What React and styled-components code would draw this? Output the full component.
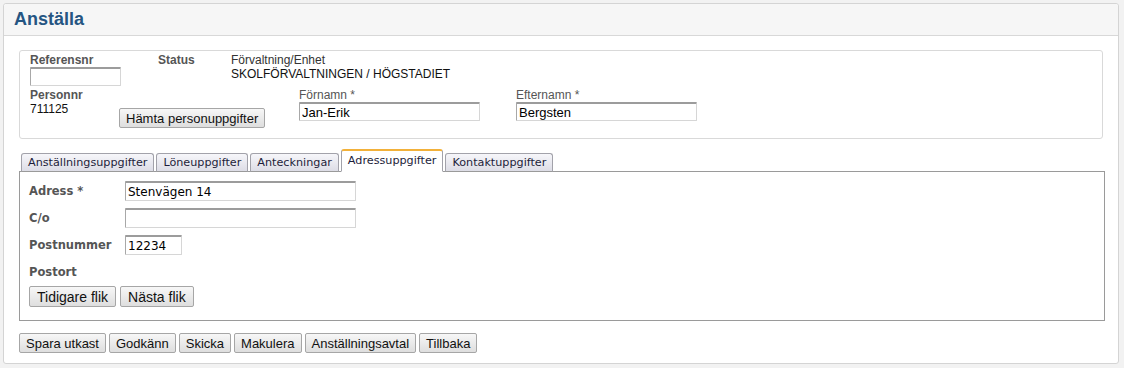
import styled, { createGlobalStyle } from "styled-components";

const GlobalStyle = createGlobalStyle`
  body {
    margin: 0;
    background: #f2f2f2;
    font-family: "Liberation Sans", Arial, sans-serif;
  }
`;

const Panel = styled.div`
  margin: 3px 5px 0 3px;
  background: #fff;
  border: 1px solid #d4d4d4;
  border-radius: 3px;
`;

const Header = styled.div`
  height: 31px;
  background: #f6f6f6;
  border-bottom: 1px solid #d8d8d8;
  border-radius: 3px 3px 0 0;
  padding-left: 10px;
`;

const Title = styled.h1`
  margin: 0;
  font-size: 18px;
  line-height: 31px;
  font-weight: bold;
  color: #255582;
`;

const Body = styled.div`
  padding: 14px 13px 10px 15px;
`;

const InfoBox = styled.div`
  margin-right: 2px;
  border: 1px solid #d9d9d9;
  border-radius: 3px;
  padding: 3px 10px 10px 10px;
`;

const InfoRow = styled.div`
  display: flex;
  margin-top: ${(p) => p.$top || 0}px;
`;

const Cell = styled.div`
  display: flex;
  flex-direction: column;
  width: ${(p) => (p.$w ? `${p.$w}px` : "auto")};
  padding-top: ${(p) => p.$pad || 0}px;
`;

const Label = styled.div`
  font-size: 12px;
  line-height: 13px;
  font-weight: ${(p) => (p.$bold ? "bold" : "normal")};
  color: ${(p) => (p.$dark ? "#333" : "#555")};
`;

const Value = styled.div`
  font-size: 12px;
  line-height: 14px;
  color: #111;
`;

const Input = styled.input`
  box-sizing: border-box;
  width: ${(p) => p.$w}px;
  height: ${(p) => p.$h || 20}px;
  margin: 0;
  padding: 0 2px;
  background: #fff;
  border: 1px solid #d6d6d6;
  border-top: 2px solid #9c9c9c;
  border-left: 1px solid #a8a8a8;
  border-radius: 1px;
  font-family: ${(p) =>
    p.$tahoma
      ? `"DejaVu Sans", Verdana, sans-serif`
      : `"Liberation Sans", Arial, sans-serif`};
  font-size: ${(p) => (p.$tahoma ? 12 : 13)}px;
  color: #000;
  outline: none;
`;

const Button = styled.button`
  height: ${(p) => (p.$big ? 21 : 20)}px;
  margin: 0;
  padding: 0 ${(p) => (p.$big ? 7 : 6)}px;
  border: 1px solid #a6a6a6;
  border-radius: 2px;
  background: linear-gradient(#f7f7f7, #dedede);
  font-family: "Liberation Sans", Arial, sans-serif;
  font-size: ${(p) => (p.$big ? 14 : 13)}px;
  color: #111;
  white-space: nowrap;
  cursor: pointer;
`;

const TabBar = styled.div`
  display: flex;
  align-items: flex-end;
  gap: 2px;
  height: 22px;
  margin-top: 11px;
  margin-bottom: -1px;
  padding-left: 2px;
  position: relative;
  z-index: 1;
`;

const Tab = styled.div`
  box-sizing: border-box;
  height: ${(p) => (p.$active ? 23 : 19)}px;
  padding: 0 6px;
  border: 1px solid #a2a2aa;
  border-top: ${(p) => (p.$active ? "2px solid #f2b13a" : "1px solid #a2a2aa")};
  border-bottom: ${(p) => (p.$active ? "1px solid #fff" : "1px solid #9a9a9a")};
  border-radius: 3px 3px 0 0;
  background: ${(p) =>
    p.$active ? "#fff" : "linear-gradient(#f6f6fa, #dddde6)"};
  font-family: "DejaVu Sans", Verdana, sans-serif;
  font-size: 11.2px;
  line-height: ${(p) => (p.$active ? 20 : 17)}px;
  color: #1d1d3a;
  white-space: nowrap;
`;

const TabPanel = styled.div`
  border: 1px solid #9a9a9a;
  padding: 9px 10px 13px 9px;
`;

const FormRow = styled.div`
  display: flex;
  align-items: center;
  margin-bottom: 7px;
`;

const FormLabel = styled.div`
  width: 96px;
  font-family: "DejaVu Sans", Verdana, sans-serif;
  font-size: 11.5px;
  font-weight: bold;
  color: #555;
`;

const PlainLabel = styled(FormLabel)`
  margin-top: 10px;
  line-height: 15px;
`;

const ButtonRow = styled.div`
  display: flex;
  gap: ${(p) => p.$gap || 4}px;
  margin-top: ${(p) => p.$top || 0}px;
  padding-left: ${(p) => p.$left || 0}px;
`;

const tabs = [
  "Anställningsuppgifter",
  "Löneuppgifter",
  "Anteckningar",
  "Adressuppgifter",
  "Kontaktuppgifter",
];

const actions = [
  "Spara utkast",
  "Godkänn",
  "Skicka",
  "Makulera",
  "Anställningsavtal",
  "Tillbaka",
];

export default function App() {
  return (
    <>
      <GlobalStyle />
      <Panel>
        <Header>
          <Title>Anställa</Title>
        </Header>
        <Body>
          <InfoBox>
            <InfoRow>
              <Cell $w={128}>
                <Label $bold>Referensnr</Label>
                <Input $w={91} $h={19} />
              </Cell>
              <Cell $w={73}>
                <Label $bold>Status</Label>
              </Cell>
              <Cell>
                <Label $dark>Förvaltning/Enhet</Label>
                <Value>SKOLFÖRVALTNINGEN / HÖGSTADIET</Value>
              </Cell>
            </InfoRow>
            <InfoRow $top={3}>
              <Cell $w={89}>
                <Label $bold>Personnr</Label>
                <Value>711125</Value>
              </Cell>
              <Cell $w={180} $pad={19}>
                <div>
                  <Button>Hämta personuppgifter</Button>
                </div>
              </Cell>
              <Cell $w={217}>
                <Label>Förnamn *</Label>
                <Input $w={181} $h={19} defaultValue="Jan-Erik" />
              </Cell>
              <Cell>
                <Label>Efternamn *</Label>
                <Input $w={181} $h={19} defaultValue="Bergsten" />
              </Cell>
            </InfoRow>
          </InfoBox>

          <TabBar>
            {tabs.map((t) => (
              <Tab key={t} $active={t === "Adressuppgifter"}>
                {t}
              </Tab>
            ))}
          </TabBar>
          <TabPanel>
            <FormRow>
              <FormLabel>Adress *</FormLabel>
              <Input $w={231} $tahoma defaultValue="Stenvägen 14" />
            </FormRow>
            <FormRow>
              <FormLabel>C/o</FormLabel>
              <Input $w={231} $tahoma />
            </FormRow>
            <FormRow>
              <FormLabel>Postnummer</FormLabel>
              <Input $w={57} $tahoma defaultValue="12234" />
            </FormRow>
            <PlainLabel>Postort</PlainLabel>
            <ButtonRow $top={6} $gap={4}>
              <Button $big>Tidigare flik</Button>
              <Button $big>Nästa flik</Button>
            </ButtonRow>
          </TabPanel>

          <ButtonRow $top={12} $gap={3}>
            {actions.map((a) => (
              <Button key={a}>{a}</Button>
            ))}
          </ButtonRow>
        </Body>
      </Panel>
    </>
  );
}
